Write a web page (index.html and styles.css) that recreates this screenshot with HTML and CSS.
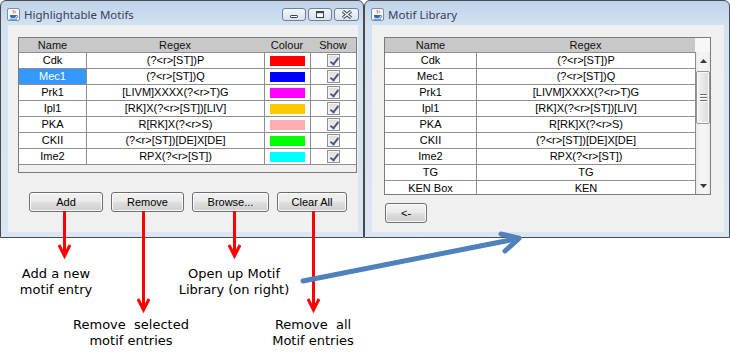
FILE: index.html
```html
<!DOCTYPE html>
<html lang="en">
<head>
  <meta charset="UTF-8" />
  <meta name="viewport" content="width=device-width, initial-scale=1.0" />
  <title>Highlightable Motifs</title>
  <link rel="stylesheet" href="styles.css">
</head>
<body>
  <div class="screen">
    <div class="desktop">

      <div class="window motifs">
        <div class="titlebar">
          <svg class="app-icon" width="13" height="13" viewBox="0 0 13 13">
            <rect x="0.5" y="0.5" width="12" height="12" rx="1.5" fill="#f5f7fa" stroke="#7d8ea8"/>
            <path d="M6.5 2c-1.4 1.1 1 1.9-0.4 3.4M8.3 2.8c-0.9 0.9 0.7 1.4-0.2 2.4" fill="none" stroke="#e4561e" stroke-width="0.9"/>
            <path d="M3 7h6v1.3c0 1-0.9 1.7-1.9 1.7H4.9C3.9 10 3 9.3 3 8.3z" fill="#2f6cc0"/>
            <path d="M9 7.5h0.8a0.9 0.9 0 0 1 0 1.8H9" fill="none" stroke="#2f6cc0" stroke-width="0.9"/>
            <path d="M2.5 11.2h7.5" stroke="#2f6cc0" stroke-width="0.9"/>
          </svg>
          <span class="title">Highlightable Motifs</span>
          <div class="controls">
            <span class="ctl">
              <svg width="10" height="9" viewBox="0 0 10 9"><rect x="1.5" y="5.5" width="7" height="2" rx="0.6" fill="#fff" stroke="#35445c"/></svg>
            </span>
            <span class="ctl">
              <svg width="10" height="9" viewBox="0 0 10 9"><rect x="1.5" y="1.5" width="7" height="6" fill="#fff" stroke="#35445c"/><path d="M2 2.5h6" stroke="#35445c" stroke-width="1.4"/></svg>
            </span>
            <span class="ctl close">
              <svg width="12" height="9" viewBox="0 0 12 9"><path d="M2 1.2l8 6.6M10 1.2l-8 6.6" stroke="#35445c" stroke-width="3.2"/><path d="M2.3 1.5l7.4 6M9.7 1.5l-7.4 6" stroke="#fff" stroke-width="1.3"/></svg>
            </span>
          </div>
        </div>
        <div class="client">
          <div class="pane">
            <table class="grid">
              <colgroup>
                <col style="width:67px"><col style="width:178px"><col style="width:46px"><col style="width:46px">
              </colgroup>
              <thead>
                <tr><th>Name</th><th>Regex</th><th>Colour</th><th>Show</th></tr>
              </thead>
              <tbody>
                <tr><td>Cdk</td><td>(?&lt;r&gt;[ST])P</td><td><span class="swatch" style="background:#ff0000"></span></td><td><span class="check"></span></td></tr>
                <tr><td class="sel">Mec1</td><td>(?&lt;r&gt;[ST])Q</td><td><span class="swatch" style="background:#0000ff"></span></td><td><span class="check"></span></td></tr>
                <tr><td>Prk1</td><td>[LIVM]XXXX(?&lt;r&gt;T)G</td><td><span class="swatch" style="background:#ff00ff"></span></td><td><span class="check"></span></td></tr>
                <tr><td>Ipl1</td><td>[RK]X(?&lt;r&gt;[ST])[LIV]</td><td><span class="swatch" style="background:#ffc800"></span></td><td><span class="check"></span></td></tr>
                <tr><td>PKA</td><td>R[RK]X(?&lt;r&gt;S)</td><td><span class="swatch" style="background:#ffafaf"></span></td><td><span class="check"></span></td></tr>
                <tr><td>CKII</td><td>(?&lt;r&gt;[ST])[DE]X[DE]</td><td><span class="swatch" style="background:#00ff00"></span></td><td><span class="check"></span></td></tr>
                <tr><td>Ime2</td><td>RPX(?&lt;r&gt;[ST])</td><td><span class="swatch" style="background:#00ffff"></span></td><td><span class="check"></span></td></tr>
              </tbody>
            </table>
          </div>
          <div class="actions">
            <button class="btn btn-add">Add</button>
            <button class="btn btn-remove">Remove</button>
            <button class="btn btn-browse">Browse...</button>
            <button class="btn btn-clear">Clear All</button>
          </div>
        </div>
      </div>

      <div class="window library">
        <div class="titlebar">
          <svg class="app-icon" width="13" height="13" viewBox="0 0 13 13">
            <rect x="0.5" y="0.5" width="12" height="12" rx="1.5" fill="#f5f7fa" stroke="#7d8ea8"/>
            <path d="M6.5 2c-1.4 1.1 1 1.9-0.4 3.4M8.3 2.8c-0.9 0.9 0.7 1.4-0.2 2.4" fill="none" stroke="#e4561e" stroke-width="0.9"/>
            <path d="M3 7h6v1.3c0 1-0.9 1.7-1.9 1.7H4.9C3.9 10 3 9.3 3 8.3z" fill="#2f6cc0"/>
            <path d="M9 7.5h0.8a0.9 0.9 0 0 1 0 1.8H9" fill="none" stroke="#2f6cc0" stroke-width="0.9"/>
            <path d="M2.5 11.2h7.5" stroke="#2f6cc0" stroke-width="0.9"/>
          </svg>
          <span class="title">Motif Library</span>
        </div>
        <div class="client">
          <div class="pane">
            <div class="viewport">
              <table class="grid">
                <colgroup>
                  <col style="width:91px"><col style="width:219px">
                </colgroup>
                <thead>
                  <tr><th>Name</th><th>Regex</th></tr>
                </thead>
                <tbody>
                  <tr><td>Cdk</td><td>(?&lt;r&gt;[ST])P</td></tr>
                  <tr><td>Mec1</td><td>(?&lt;r&gt;[ST])Q</td></tr>
                  <tr><td>Prk1</td><td>[LIVM]XXXX(?&lt;r&gt;T)G</td></tr>
                  <tr><td>Ipl1</td><td>[RK]X(?&lt;r&gt;[ST])[LIV]</td></tr>
                  <tr><td>PKA</td><td>R[RK]X(?&lt;r&gt;S)</td></tr>
                  <tr><td>CKII</td><td>(?&lt;r&gt;[ST])[DE]X[DE]</td></tr>
                  <tr><td>Ime2</td><td>RPX(?&lt;r&gt;[ST])</td></tr>
                  <tr><td>TG</td><td>TG</td></tr>
                  <tr><td>KEN Box</td><td>KEN</td></tr>
                </tbody>
              </table>
            </div>
            <div class="vscroll">
              <span class="corner"></span>
              <div class="track">
                <span class="step">
                  <svg width="7" height="4" viewBox="0 0 7 4"><path d="M0 4L3.5 0L7 4z" fill="#3a3a3a"/></svg>
                </span>
                <span class="thumb"><i></i><i></i><i></i></span>
                <span class="step step-down">
                  <svg width="7" height="4" viewBox="0 0 7 4"><path d="M0 0L3.5 4L7 0z" fill="#3a3a3a"/></svg>
                </span>
              </div>
            </div>
          </div>
          <button class="btn btn-back">&lt;-</button>
        </div>
      </div>

    </div>

    <svg class="arrows" width="730" height="357" viewBox="0 0 730 357">
      <g fill="none" stroke="#ff0000" stroke-width="3">
        <path d="M64.5 211V255M59 245L64.5 256L70 245"/>
        <path d="M143.5 211V309M138 299L143.5 310L149 299"/>
        <path d="M234.5 211V255M229 245L234.5 256L240 245"/>
        <path d="M313.5 211V309M308 299L313.5 310L319 299"/>
      </g>
      <g fill="none" stroke="#4f81bd" stroke-width="5" stroke-linecap="round" stroke-linejoin="round">
        <path d="M303 281L518 238.5"/>
        <path d="M501 234L519 238.3L505 251"/>
      </g>
    </svg>

    <p class="note note-add">Add a new<br>motif entry</p>
    <p class="note note-remove">Remove&nbsp; selected<br>motif entries</p>
    <p class="note note-browse">Open up Motif<br>Library (on right)</p>
    <p class="note note-clear">Remove&nbsp; all<br>Motif entries</p>
  </div>
</body>
</html>
```

FILE: styles.css
```css
* {
  box-sizing: border-box;
}

body {
  margin: 0;
  background: #fff;
  font-family: "Liberation Sans", Arial, sans-serif;
}

.screen {
  position: relative;
  width: 730px;
  height: 357px;
  overflow: hidden;
}

.desktop {
  display: flex;
}

/* window frames */

.window {
  display: flex;
  flex-direction: column;
  height: 238px;
  border: 1px solid #4a4a4a;
  border-radius: 6px 6px 0 0;
  background: linear-gradient(to bottom, #bed2ea 0, #d3e2f2 24px, #dae6f4 100%);
  padding: 0 5px 5px 7px;
}

.motifs {
  width: 364px;
}

.library {
  width: 366px;
}

.titlebar {
  display: flex;
  align-items: center;
  height: 24px;
  padding-top: 2px;
  margin-left: -1px;
  gap: 4px;
}

.app-icon {
  flex: none;
}

.title {
  font-family: "Noto Sans", "Open Sans", sans-serif;
  font-size: 11.5px;
  color: #39405a;
}

.controls {
  display: flex;
  gap: 2px;
  margin: 5px -1px 0 auto;
  align-self: flex-start;
}

.ctl {
  display: flex;
  align-items: center;
  justify-content: center;
  width: 24px;
  height: 13px;
  border: 1px solid #6f7f98;
  border-radius: 3px;
  background: linear-gradient(to bottom, #f3f6fa, #d9e3ef);
}

.ctl.close {
  width: 25px;
}

.client {
  flex: 1;
  display: flex;
  flex-direction: column;
  align-items: flex-start;
  background: #f0f0f0;
  padding: 12px 0 0 10px;
}

.library .client {
  padding-left: 12px;
}

/* tables */

.pane {
  border: 1px solid #7c7c7c;
  background: #f0f0f0;
  overflow: hidden;
}

.motifs .pane {
  width: 339px;
  height: 136px;
}

.library .pane {
  display: flex;
  width: 327px;
  height: 158px;
}

.viewport {
  width: 310px;
  overflow: hidden;
}

.grid {
  border-collapse: separate;
  border-spacing: 0;
  table-layout: fixed;
  font-size: 11px;
  color: #000;
}

.motifs .grid {
  width: 337px;
}

.library .grid {
  width: 310px;
}

.grid th {
  height: 14px;
  line-height: 14px;
  padding: 0;
  font-weight: normal;
  background: #c8c8c8;
  color: #111;
}

.grid td {
  padding: 0;
  line-height: 15px;
  text-align: center;
  white-space: nowrap;
  background: #fff;
  border-top: 1px solid #8e8e8e;
}

.grid td + td {
  border-left: 1px solid #8e8e8e;
}

.motifs .grid tr:last-child td {
  border-bottom: 1px solid #8e8e8e;
}

.grid td.sel {
  background: #3399ff;
  color: #fff;
}

.swatch {
  display: block;
  width: 35px;
  height: 10px;
  margin: 0 auto;
}

.check {
  position: relative;
  display: block;
  width: 13px;
  height: 13px;
  margin: 0 auto;
  border: 1px solid #8f8f8f;
  background: linear-gradient(to bottom, #dedede, #f6f6f6);
  box-shadow: inset 0 0 0 1px #f4f4f4;
}

.check::after {
  content: "";
  position: absolute;
  left: 4px;
  top: 1px;
  width: 3px;
  height: 7px;
  border: solid #4a5b82;
  border-width: 0 2px 2px 0;
  transform: rotate(38deg);
}

/* scrollbar */

.vscroll {
  display: flex;
  flex-direction: column;
  width: 15px;
}

.corner {
  height: 14px;
  background: #f7f7f7;
}

.track {
  flex: 1;
  display: flex;
  flex-direction: column;
  align-items: center;
  border-left: 1px solid #8e8e8e;
  background: linear-gradient(to right, #e9e9e9, #f4f4f4 30%, #f4f4f4 70%, #ebebeb);
}

.step {
  display: flex;
  align-items: center;
  justify-content: center;
  width: 100%;
  height: 18px;
}

.step-down {
  margin-top: auto;
  height: 17px;
}

.thumb {
  display: flex;
  flex-direction: column;
  align-items: center;
  justify-content: center;
  gap: 2px;
  width: 14px;
  height: 53px;
  margin-top: 1px;
  border: 1px solid #979797;
  border-radius: 2px;
  background: linear-gradient(to right, #f4f4f4, #e8e8e8 50%, #dadada);
  box-shadow: inset 0 0 0 1px #fafafa;
}

.thumb i {
  display: block;
  width: 7px;
  height: 1px;
  background: #6f6f6f;
  box-shadow: 0 1px 0 #fff;
}

/* buttons */

.btn {
  height: 20px;
  padding: 0;
  border: 1px solid #707070;
  border-radius: 3px;
  background: linear-gradient(to bottom, #f2f2f2 0, #ebebeb 45%, #dddddd 55%, #cfcfcf 100%);
  box-shadow: inset 0 0 0 1px #fbfbfb;
  font-family: "Liberation Sans", Arial, sans-serif;
  font-size: 11px;
  color: #000;
}

.actions {
  display: flex;
  gap: 8px;
  margin: 19px 0 0 11px;
}

.btn-add {
  width: 74px;
}

.btn-remove {
  width: 73px;
}

.btn-browse {
  width: 77px;
}

.btn-clear {
  width: 70px;
}

.btn-back {
  width: 42px;
  margin: 8px 0 0 1px;
}

/* annotations */

.arrows {
  position: absolute;
  left: 0;
  top: 0;
  pointer-events: none;
}

.note {
  position: absolute;
  margin: 0;
  font-family: "DejaVu Sans", Verdana, sans-serif;
  font-size: 13px;
  line-height: 16px;
  color: #000;
  text-align: center;
  white-space: nowrap;
}

.note-add {
  left: 1px;
  top: 266px;
  width: 110px;
}

.note-remove {
  left: 61px;
  top: 317px;
  width: 140px;
}

.note-browse {
  left: 169px;
  top: 266px;
  width: 130px;
}

.note-clear {
  left: 253px;
  top: 317px;
  width: 120px;
}
```
